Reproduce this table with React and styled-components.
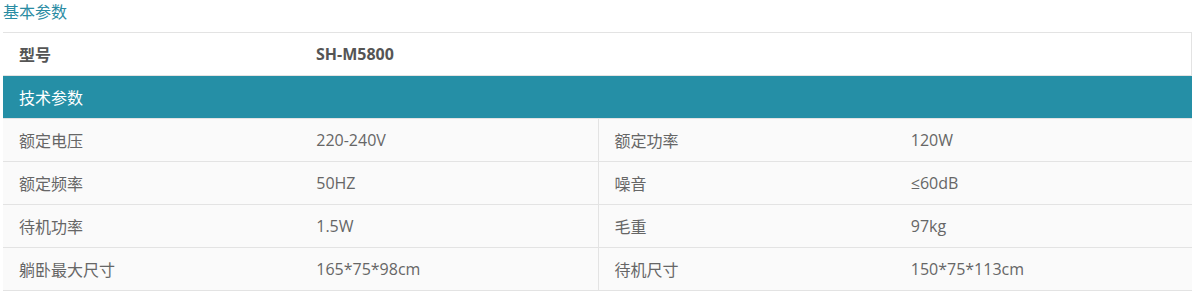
import React from "react";
import styled, { createGlobalStyle } from "styled-components";

const GlobalStyle = createGlobalStyle`
  html, body {
    margin: 0;
    padding: 0;
    background: #fff;
  }
  body {
    font-family: "Open Sans", "Noto Sans CJK SC", sans-serif;
    font-size: 16px;
  }
`;

const Page = styled.div`
  width: 1189px;
  margin-left: 3px;
`;

const Title = styled.div`
  color: #2a8ca3;
  line-height: 24px;
  height: 32px;
`;

const Table = styled.div`
  display: flex;
  flex-direction: column;
  border-top: 1px solid #e3e3e3;
`;

const Row = styled.div`
  display: grid;
  grid-template-columns: repeat(4, 1fr);
  height: 42px;
  align-items: stretch;
  background: ${(p) => (p.$alt ? "#fafafa" : "#fff")};
  border-bottom: 1px solid #e3e3e3;
  border-right: ${(p) => (p.$edge ? "1px solid #e3e3e3" : "none")};
`;

const Cell = styled.div`
  display: flex;
  align-items: center;
  padding-left: 16px;
  color: #666;
  font-weight: ${(p) => (p.$bold ? 700 : 400)};
  ${(p) => p.$bold && "color: #555;"}
  border-left: ${(p) => (p.$divide ? "1px solid #e3e3e3" : "none")};
`;

const Band = styled.div`
  display: flex;
  align-items: center;
  height: 42px;
  padding-left: 16px;
  background: #258fa6;
  color: #fff;
  border-bottom: 1px solid #e3e3e3;
`;

const specs = [
  ["额定电压", "220-240V", "额定功率", "120W"],
  ["额定频率", "50HZ", "噪音", "≤60dB"],
  ["待机功率", "1.5W", "毛重", "97kg"],
  ["躺卧最大尺寸", "165*75*98cm", "待机尺寸", "150*75*113cm"],
];

const App = () => {
  return (
    <Page>
      <GlobalStyle />
      <Title>基本参数</Title>
      <Table>
        <Row $edge>
          <Cell $bold>型号</Cell>
          <Cell $bold>SH-M5800</Cell>
          <Cell />
          <Cell />
        </Row>
        <Band>技术参数</Band>
        {specs.map((r) => (
          <Row $alt key={r[0]}>
            <Cell>{r[0]}</Cell>
            <Cell>{r[1]}</Cell>
            <Cell $divide>{r[2]}</Cell>
            <Cell>{r[3]}</Cell>
          </Row>
        ))}
      </Table>
    </Page>
  );
};

export default App;
